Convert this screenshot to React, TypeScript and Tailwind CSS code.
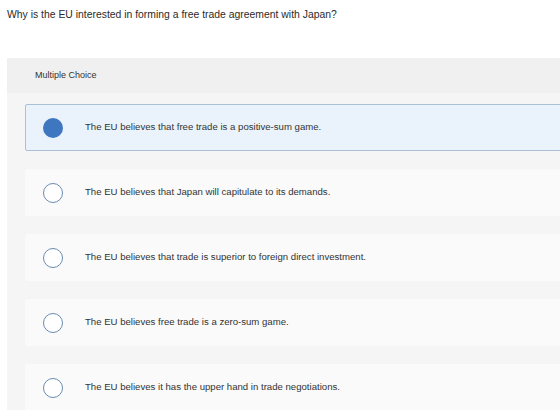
const options = [
  "The EU believes that free trade is a positive-sum game.",
  "The EU believes that Japan will capitulate to its demands.",
  "The EU believes that trade is superior to foreign direct investment.",
  "The EU believes free trade is a zero-sum game.",
  "The EU believes it has the upper hand in trade negotiations.",
];

export default function App() {
  const selected = 0;
  return (
    <div className="w-[560px] h-[410px] overflow-hidden bg-white text-[#333] font-['Liberation_Sans',Arial,sans-serif]">
      <p className="pt-[8px] pl-[7px] text-[10.4px] leading-[14px] text-[#2b2b2b]">
        Why is the EU interested in forming a free trade agreement with Japan?
      </p>

      <div className="mt-[36px] ml-[7px] w-[600px] bg-[#f5f5f5]">
        <div className="h-[35px] bg-[#f0f0f0] pl-[28px] flex items-center text-[9px] text-[#333]">
          Multiple Choice
        </div>

        <div className="pt-[11px] pl-[18px] flex flex-col gap-[18px]">
          {options.map((text, i) => {
            const isSel = i === selected;
            return (
              <div
                key={i}
                className={
                  isSel
                    ? "h-[47px] flex items-center rounded-[2px] border border-[#a9c0d6] bg-[#eaf3fc]"
                    : "h-[47px] flex items-center rounded-[2px] border border-transparent bg-[#fafafa]"
                }
              >
                <div className="ml-[17px] w-[20px] h-[20px] shrink-0">
                  {isSel ? (
                    <div className="w-[20px] h-[20px] rounded-full bg-[#3e77bf]" />
                  ) : (
                    <div className="w-[20px] h-[20px] rounded-full border-[1.5px] border-[#6a8bb0] bg-white" />
                  )}
                </div>
                <span className="ml-[22px] text-[9.6px] text-[#333]">{text}</span>
              </div>
            );
          })}
        </div>
      </div>
    </div>
  );
}
